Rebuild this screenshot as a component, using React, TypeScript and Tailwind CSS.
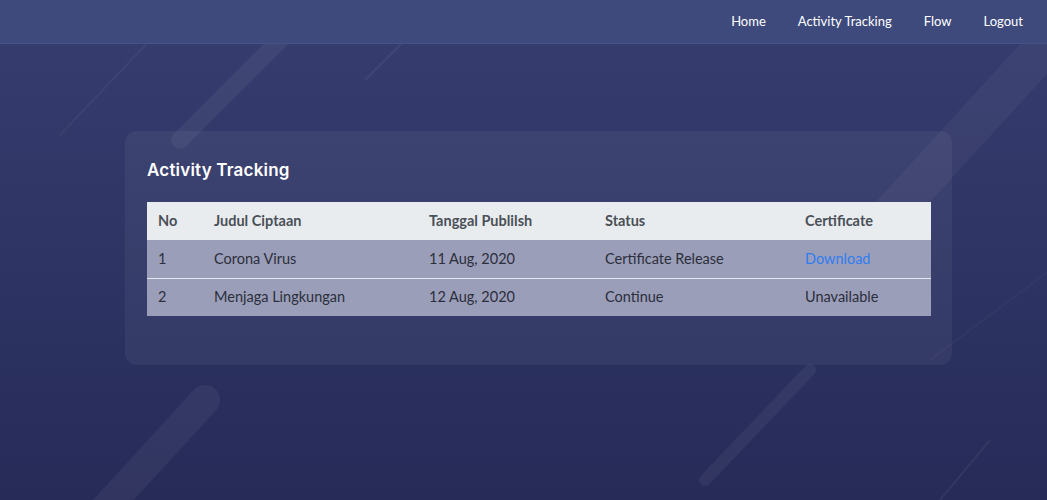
const rows = [
  { no: 1, judul: "Corona Virus", tanggal: "11 Aug, 2020", status: "Certificate Release", cert: "Download" },
  { no: 2, judul: "Menjaga Lingkungan", tanggal: "12 Aug, 2020", status: "Continue", cert: "Unavailable" },
];

export default function App() {
  return (
    <main
      className="relative min-h-[500px] h-[500px] overflow-hidden bg-gradient-to-b from-[#373e70] to-[#262b58] text-white"
      style={{ fontFamily: "Lato, 'Liberation Sans', sans-serif" }}
    >
      {/* background stripes */}
      <svg className="absolute inset-0 pointer-events-none" width="1047" height="500" viewBox="0 0 1047 500">
        <line x1="330" y1="-10" x2="180" y2="140" stroke="#ffffff" strokeOpacity="0.05" strokeWidth="18" strokeLinecap="round" />
        <line x1="155" y1="35" x2="60" y2="135" stroke="#ffffff" strokeOpacity="0.04" strokeWidth="2" />
        <line x1="435" y1="10" x2="365" y2="80" stroke="#ffffff" strokeOpacity="0.05" strokeWidth="2" />
        <line x1="205" y1="400" x2="95" y2="520" stroke="#ffffff" strokeOpacity="0.05" strokeWidth="30" strokeLinecap="round" />
        <line x1="810" y1="370" x2="705" y2="480" stroke="#ffffff" strokeOpacity="0.05" strokeWidth="12" strokeLinecap="round" />
        <line x1="990" y1="440" x2="940" y2="500" stroke="#ffffff" strokeOpacity="0.05" strokeWidth="2" />
        <line x1="1060" y1="30" x2="850" y2="260" stroke="#ffffff" strokeOpacity="0.04" strokeWidth="40" />
        <line x1="1050" y1="270" x2="930" y2="360" stroke="#ffffff" strokeOpacity="0.03" strokeWidth="2" />
      </svg>

      {/* navbar */}
      <nav className="relative flex h-[44px] items-center justify-end gap-[32px] bg-[#3e4a7c] pr-[24px] text-[13px] border-b border-[#46538a]">
        <a className="text-white">Home</a>
        <a className="text-white">Activity Tracking</a>
        <a className="text-white">Flow</a>
        <a className="text-white">Logout</a>
      </nav>

      <section className="relative mx-[125px] mt-[87px] w-[827px] h-[234px] rounded-[12px] bg-[#ffffff0d] px-[22px] pt-[28px]">
        <h1
          className="text-[17px] font-semibold text-white mb-[21px] leading-[22px]"
          style={{ fontFamily: "Inter, 'Open Sans', sans-serif", letterSpacing: "0.2px" }}
        >
          Activity Tracking
        </h1>
        <table className="w-[784px] border-collapse text-[14.5px]">
          <thead>
            <tr className="bg-[#e9ecef] text-[#495057] h-[38px]">
              <th className="w-[56px] pl-[11px] text-left font-bold">No</th>
              <th className="w-[215px] pl-[11px] text-left font-bold">Judul Ciptaan</th>
              <th className="w-[176px] pl-[11px] text-left font-bold">Tanggal Publilsh</th>
              <th className="w-[200px] pl-[11px] text-left font-bold">Status</th>
              <th className="pl-[11px] text-left font-bold">Certificate</th>
            </tr>
          </thead>
          <tbody>
            {rows.map((r, i) => (
              <tr
                key={r.no}
                className={`bg-[#9b9eb8] text-[#2b2f3c] h-[38px] ${i > 0 ? "border-t border-[#e6e7ef]" : ""}`}
              >
                <td className="pl-[11px]">{r.no}</td>
                <td className="pl-[11px]">{r.judul}</td>
                <td className="pl-[11px]">{r.tanggal}</td>
                <td className="pl-[11px]">{r.status}</td>
                <td className="pl-[11px]">
                  {r.cert === "Download" ? <a className="text-[#2f7cf0]">Download</a> : r.cert}
                </td>
              </tr>
            ))}
          </tbody>
        </table>
      </section>
    </main>
  );
}
